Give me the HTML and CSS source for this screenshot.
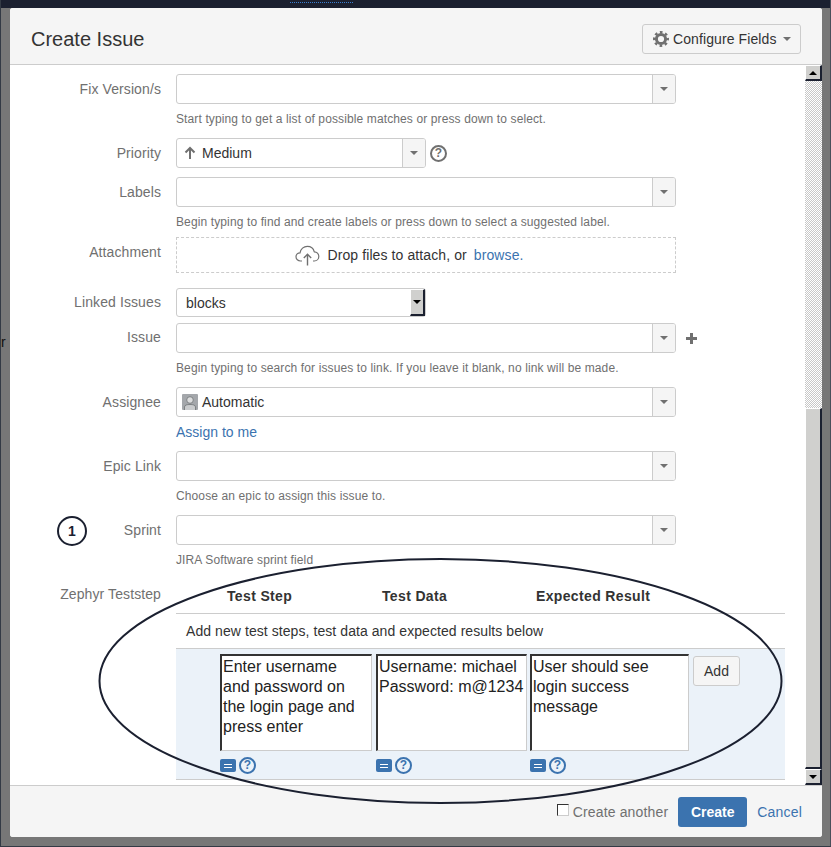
FILE: index.html
```html
<!DOCTYPE html>
<html lang="en">
<head>
    <meta charset="UTF-8">
    <meta name="viewport" content="width=device-width, initial-scale=1.0">
    <title>Create Issue</title>
    <link rel="stylesheet" href="styles.css">
</head>
<body>

    <div class="topbar"><span class="topbar-link"></span></div>
    <span class="stray">r</span>

    <div class="dialog">
        <header class="dialog-header">
            <h2>Create Issue</h2>
            <button class="config-btn">
                <svg width="16" height="16" viewBox="0 0 16 16">
                    <circle cx="8" cy="8" r="4.6" fill="none" stroke="#707070" stroke-width="3"/>
                    <circle cx="8" cy="8" r="6.8" fill="none" stroke="#707070" stroke-width="2.4" stroke-dasharray="2.67 2.67" stroke-dashoffset="1.33"/>
                </svg>
                Configure Fields
                <span class="caret"></span>
            </button>
        </header>

        <div class="dialog-middle">
            <div class="dialog-content">

                <div class="row">
                    <label>Fix Version/s</label>
                    <div class="field">
                        <div class="combo"><span class="combo-value"></span><span class="combo-arrow"></span></div>
                        <div class="hint">Start typing to get a list of possible matches or press down to select.</div>
                    </div>
                </div>

                <div class="row">
                    <label>Priority</label>
                    <div class="field field-inline">
                        <div class="combo combo-short">
                            <span class="combo-value">
                                <svg width="12" height="14" viewBox="0 0 12 14">
                                    <path d="M6 13V2M1.500 6.500L6 2l4.500 4.500" fill="none" stroke="#707070" stroke-width="2"/>
                                </svg>
                                Medium
                            </span>
                            <span class="combo-arrow"></span>
                        </div>
                        <span class="help help-grey">?</span>
                    </div>
                </div>

                <div class="row row-tight">
                    <label>Labels</label>
                    <div class="field">
                        <div class="combo"><span class="combo-value"></span><span class="combo-arrow"></span></div>
                        <div class="hint">Begin typing to find and create labels or press down to select a suggested label.</div>
                    </div>
                </div>

                <div class="row row-attach">
                    <label>Attachment</label>
                    <div class="field">
                        <div class="dropzone">
                            <svg width="25" height="21" viewBox="0 0 25 21">
                                <path d="M7 16H5.500C3 16 1 14.200 1 11.800C1 9.500 2.800 7.800 5 7.800C5.600 4 8.700 1.300 12.300 1.300C15.700 1.300 18.500 3.500 19.300 6.800C21.800 7 23.800 9 23.800 11.500C23.800 14 21.800 16 19.300 16H18" fill="none" stroke="#707070" stroke-width="1.200"/>
                                <path d="M12.500 20.500V9.500M8.800 13L12.500 9.300L16.200 13" fill="none" stroke="#707070" stroke-width="1.400"/>
                            </svg>
                            <span>Drop files to attach, or</span>
                            <a class="link" href="#">browse.</a>
                        </div>
                    </div>
                </div>

                <div class="row row-linked">
                    <label>Linked Issues</label>
                    <div class="field">
                        <div class="native-select">
                            <span>blocks</span>
                            <span class="native-arrow"></span>
                        </div>
                    </div>
                </div>

                <div class="row row-issue">
                    <label>Issue</label>
                    <div class="field">
                        <div class="field-inline">
                            <div class="combo"><span class="combo-value"></span><span class="combo-arrow"></span></div>
                            <svg class="plus" width="11" height="11" viewBox="0 0 11 11">
                                <path d="M5.500 0v11M0 5.500h11" stroke="#707070" stroke-width="3"/>
                            </svg>
                        </div>
                        <div class="hint">Begin typing to search for issues to link. If you leave it blank, no link will be made.</div>
                    </div>
                </div>

                <div class="row">
                    <label>Assignee</label>
                    <div class="field">
                        <div class="combo">
                            <span class="combo-value combo-avatar">
                                <svg width="16" height="16" viewBox="0 0 16 16">
                                    <rect width="16" height="16" rx="1" fill="#a4a7ab"/>
                                    <circle cx="8" cy="6" r="3.300" fill="#dcddde" stroke="#6f7275" stroke-width="0.800"/>
                                    <path d="M2.500 16V13C2.500 11 5 10.500 8 10.500S13.500 11 13.500 13V16" fill="#c9cbcd" stroke="#6f7275" stroke-width="0.800"/>
                                </svg>
                                Automatic
                            </span>
                            <span class="combo-arrow"></span>
                        </div>
                        <div class="hint hint-link"><a class="link" href="#">Assign to me</a></div>
                    </div>
                </div>

                <div class="row">
                    <label>Epic Link</label>
                    <div class="field">
                        <div class="combo"><span class="combo-value"></span><span class="combo-arrow"></span></div>
                        <div class="hint">Choose an epic to assign this issue to.</div>
                    </div>
                </div>

                <div class="row">
                    <label>Sprint</label>
                    <div class="field">
                        <div class="combo"><span class="combo-value"></span><span class="combo-arrow"></span></div>
                        <div class="hint">JIRA Software sprint field</div>
                    </div>
                </div>

                <div class="row row-zephyr">
                    <label>Zephyr Teststep</label>
                    <div class="teststep">
                        <div class="ts-head">
                            <span>Test Step</span>
                            <span>Test Data</span>
                            <span>Expected Result</span>
                        </div>
                        <div class="ts-note">Add new test steps, test data and expected results below</div>
                        <div class="ts-form">
                            <div class="ts-col ts-col-step">
                                <textarea>Enter username and password on the login page and press enter</textarea>
                                <div class="ts-icons">
                                    <span class="wiki-btn"></span>
                                    <span class="help">?</span>
                                </div>
                            </div>
                            <div class="ts-col ts-col-data">
                                <textarea>Username: michael
Password: m@1234</textarea>
                                <div class="ts-icons">
                                    <span class="wiki-btn"></span>
                                    <span class="help">?</span>
                                </div>
                            </div>
                            <div class="ts-col ts-col-result">
                                <textarea>User should see login success message</textarea>
                                <div class="ts-icons">
                                    <span class="wiki-btn"></span>
                                    <span class="help">?</span>
                                </div>
                            </div>
                            <button class="add-btn">Add</button>
                        </div>
                    </div>
                </div>

            </div>

            <div class="scrollbar">
                <span class="scroll-btn scroll-up"></span>
                <span class="scroll-track"></span>
                <span class="scroll-thumb"></span>
                <span class="scroll-btn scroll-down"></span>
            </div>
        </div>

        <footer class="dialog-footer">
            <input type="checkbox" class="checkbox">
            <span class="another">Create another</span>
            <button class="create-btn">Create</button>
            <a class="link cancel" href="#">Cancel</a>
        </footer>
    </div>

    <!-- annotations drawn on top of the screenshot -->
    <svg class="annotation" width="831" height="847" viewBox="0 0 831 847">
        <ellipse cx="440.500" cy="681" rx="341" ry="122" fill="none" stroke="#1b2030" stroke-width="2"/>
    </svg>
    <div class="step-badge">1</div>

</body>
</html>
```

FILE: styles.css
```css
* {
    box-sizing: border-box;
}
html, body {
    margin: 0;
    height: 847px;
    overflow: hidden;
}
body {
    position: relative;
    background: #777;
    font-family: "Liberation Sans", Arial, sans-serif;
    font-size: 14px;
    color: #333;
    border-left: 1px solid #333a45;
    border-bottom: 1px solid #333a45;
    border-right: 1px solid #4a4f5a;
}
.topbar {
    height: 8px;
    background: #1b2030;
    margin: 0 -1px;
}
.topbar-link {
    display: block;
    width: 63px;
    margin-left: 290px;
    border-top: 1px dotted #3b7fd0;
    position: relative;
    top: 2px;
}
.stray {
    position: absolute;
    left: 0;
    top: 334px;
    color: #111;
    font-size: 14px;
}

.dialog {
    margin: 0 9px;
    height: 829px;
    width: 812px;
    background: #fff;
    border-radius: 3px;
    display: flex;
    flex-direction: column;
}
.dialog-header {
    height: 57px;
    flex: none;
    background: #f5f5f5;
    border-bottom: 1px solid #ccc;
    border-radius: 3px 3px 0 0;
    display: flex;
    justify-content: space-between;
    align-items: flex-start;
    padding: 16px 21px 0 21px;
}
.dialog-header h2 {
    margin: 0;
    font-size: 20px;
    font-weight: normal;
    line-height: 30px;
    color: #333;
}
.config-btn {
    width: 159px;
    height: 30px;
    background: #f5f5f5;
    border: 1px solid #ccc;
    border-radius: 3px;
    font: 14px "Liberation Sans", Arial, sans-serif;
    letter-spacing: 0.1px;
    color: #333;
    display: flex;
    align-items: center;
    gap: 4px;
    padding: 0 0 0 10px;
}
.caret {
    width: 0;
    height: 0;
    margin-left: 2px;
    border: 4px solid transparent;
    border-top-color: #707070;
    border-bottom-width: 0;
}

.dialog-middle {
    flex: 1;
    display: flex;
    min-height: 0;
}
.dialog-content {
    flex: 1;
    padding: 9px 20px 0 1px;
    overflow: hidden;
}

.row {
    display: flex;
    padding-bottom: 9px;
}
.row label {
    width: 150px;
    flex: none;
    margin: 7px 15px 0 0;
    text-align: right;
    color: #707070;
    line-height: 16px;
    letter-spacing: 0.1px;
}
.row-tight {
    padding-bottom: 5px;
}
.row-attach {
    padding-bottom: 15px;
}
.row-linked {
    padding-bottom: 6px;
}
.row-linked label, .row-issue label {
    margin-top: 6px;
}
.row-zephyr {
    padding-bottom: 0;
}

.field {
    width: 500px;
    flex: none;
}
.field-inline {
    display: flex;
    align-items: center;
}
.combo {
    width: 500px;
    height: 30px;
    flex: none;
    display: flex;
    border: 1px solid #ccc;
    border-radius: 3px;
    background: #fff;
}
.combo-short {
    width: 250px;
}
.combo-value {
    flex: 1;
    display: flex;
    align-items: center;
    gap: 6px;
    padding-left: 7px;
    color: #333;
}
.combo-avatar {
    padding-left: 5px;
    gap: 4px;
}
.combo-arrow {
    width: 23px;
    background: #f5f5f5;
    border-left: 1px solid #ccc;
    border-radius: 0 2px 2px 0;
    display: flex;
    align-items: center;
    justify-content: center;
}
.combo-arrow::after {
    content: "";
    border: 4px solid transparent;
    border-top-color: #707070;
    border-bottom-width: 0;
}
.help {
    width: 17px;
    height: 17px;
    flex: none;
    border: 2px solid #3b73af;
    border-radius: 50%;
    color: #3b73af;
    font-size: 12px;
    font-weight: bold;
    line-height: 13px;
    text-align: center;
}
.help-grey {
    border-color: #707070;
    color: #707070;
    margin-left: 4px;
}
.plus {
    margin-left: 10px;
    flex: none;
}
.hint {
    margin: 7px 0 2px;
    font-size: 12px;
    line-height: 16px;
    letter-spacing: 0.12px;
    color: #707070;
}
.hint-link {
    font-size: 14px;
    letter-spacing: 0;
}
.link {
    color: #3b73af;
    text-decoration: none;
}

.dropzone {
    height: 36px;
    border: 1px dashed #ccc;
    display: flex;
    align-items: center;
    justify-content: center;
    gap: 7px;
    padding-right: 33px;
    letter-spacing: 0.1px;
    color: #333;
}
.native-select {
    width: 250px;
    height: 29px;
    border: 1px solid #ccc;
    border-radius: 3px;
    display: flex;
    justify-content: space-between;
    align-items: center;
    padding: 1px 0 0 9px;
    color: #333;
}
.native-arrow {
    width: 15px;
    height: 27px;
    margin-top: -1px;
    background: #d0d0ce;
    border-style: solid;
    border-width: 1px 2px 2px 1px;
    border-color: #fff #1b2030 #1b2030 #fff;
    display: flex;
    align-items: center;
    justify-content: center;
}
.native-arrow::after {
    content: "";
    border: 4px solid transparent;
    border-top-color: #000;
    border-bottom-width: 0;
}

.teststep {
    width: 609px;
    flex: none;
}
.ts-head {
    height: 35px;
    border-bottom: 1px solid #ccc;
    display: flex;
    align-items: center;
    padding: 0 0 0 51px;
    font-weight: bold;
    letter-spacing: 0.35px;
}
.ts-head span:nth-child(1) {
    width: 155px;
}
.ts-head span:nth-child(2) {
    width: 154px;
}
.ts-note {
    height: 34px;
    line-height: 35px;
    padding-left: 10px;
    letter-spacing: 0.07px;
}
.ts-form {
    height: 132px;
    background: #ebf2f9;
    border-top: 1px solid #ccc;
    border-bottom: 1px solid #ccc;
    display: flex;
    padding: 5px 0 0 44px;
}
.ts-col {
    flex: none;
}
.ts-col-step {
    width: 152px;
    margin-right: 4px;
}
.ts-col-data {
    width: 151px;
    margin-right: 3px;
}
.ts-col-result {
    width: 159px;
    margin-right: 4px;
}
.ts-col textarea {
    display: block;
    width: 100%;
    height: 97px;
    resize: none;
    padding: 1px 14px 0 1px;
    border-style: solid;
    border-width: 2px 1px 1px 2px;
    border-color: #333 #ccc #ccc #333;
    background: #fff;
    font: 16px/20px "Liberation Sans", Arial, sans-serif;
    color: #222;
    overflow: hidden;
}
.ts-col-data textarea {
    padding-right: 0;
}
.ts-icons {
    display: flex;
    align-items: center;
    gap: 3px;
    margin-top: 6px;
}
.wiki-btn {
    width: 16px;
    height: 13px;
    background: #3b73af;
    border-radius: 2px;
    display: flex;
    flex-direction: column;
    align-items: center;
    justify-content: center;
    gap: 2px;
}
.wiki-btn::before, .wiki-btn::after {
    content: "";
    width: 8px;
    height: 1px;
    background: #fff;
}
.add-btn {
    width: 47px;
    height: 30px;
    margin-top: 2px;
    background: #f5f5f5;
    border: 1px solid #ccc;
    border-radius: 3px;
    font: 14px "Liberation Sans", Arial, sans-serif;
    color: #333;
}

.scrollbar {
    width: 17px;
    flex: none;
    display: flex;
    flex-direction: column;
}
.scroll-btn, .scroll-thumb {
    background: #d0d0ce;
    border-style: solid;
    border-width: 1px 2px 2px 1px;
    border-color: #fff #1b2030 #1b2030 #fff;
    flex: none;
}
.scroll-btn {
    height: 16px;
    display: flex;
    align-items: center;
    justify-content: center;
}
.scroll-up::after {
    content: "";
    border: 4px solid transparent;
    border-bottom-color: #000;
    border-top-width: 0;
}
.scroll-down::after {
    content: "";
    border: 4px solid transparent;
    border-top-color: #000;
    border-bottom-width: 0;
}
.scroll-track {
    flex: 1;
    background: repeating-conic-gradient(#c8c8c8 0 25%, #fff 0 50%) 0 0 / 2px 2px;
}
.scroll-thumb {
    height: 361px;
}

.dialog-footer {
    height: 52px;
    flex: none;
    background: #f5f5f5;
    border-top: 1px solid #ccc;
    border-radius: 0 0 3px 3px;
    display: flex;
    align-items: center;
    justify-content: flex-end;
    padding: 0 20px 0 0;
}
.checkbox {
    appearance: none;
    width: 12px;
    height: 12px;
    margin: -4px 4px 0 0;
    background: #fff;
    border: 1px solid;
    border-color: #333 #ccc #ccc #333;
}
.another {
    color: #707070;
    letter-spacing: 0.15px;
    margin-right: 10px;
}
.create-btn {
    width: 69px;
    height: 30px;
    background: #3b73af;
    border: 0;
    border-radius: 3px;
    color: #fff;
    font: bold 14px "Liberation Sans", Arial, sans-serif;
    margin-right: 10px;
}
.cancel {
    letter-spacing: 0.2px;
}

.annotation {
    position: absolute;
    left: -1px;
    top: 0;
    pointer-events: none;
}
.step-badge {
    position: absolute;
    left: 56px;
    top: 516px;
    width: 30px;
    height: 30px;
    border: 2px solid #1b2030;
    border-radius: 50%;
    background: #fff;
    text-align: center;
    font-weight: bold;
    line-height: 26px;
    color: #1b2030;
}
```
